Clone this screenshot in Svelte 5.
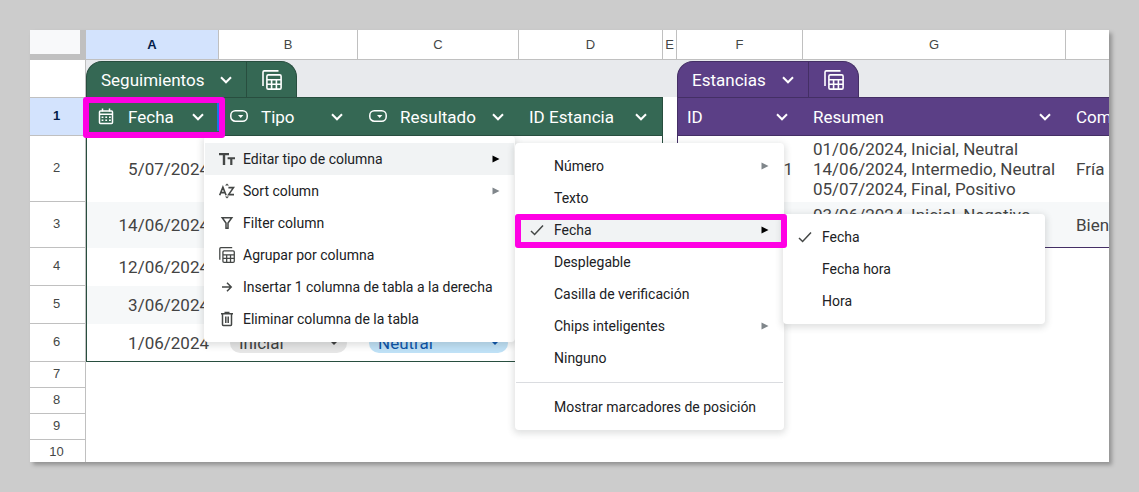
<script>
  const columns = [
    { id: 'A', width: 133 },
    { id: 'B', width: 139 },
    { id: 'C', width: 161 },
    { id: 'D', width: 144 },
    { id: 'E', width: 14 },
    { id: 'F', width: 126 },
    { id: 'G', width: 263 },
    { id: '', width: null }
  ];

  const fields = [
    { name: 'Fecha', icon: 'calendar', theme: 'green', first: true },
    { name: 'Tipo', icon: 'dropdown', theme: 'green' },
    { name: 'Resultado', icon: 'dropdown', theme: 'green' },
    { name: 'ID Estancia', theme: 'green', last: true },
    null,
    { name: 'ID', theme: 'purple', first: true },
    { name: 'Resumen', theme: 'purple' },
    { name: 'Com', theme: 'purple', open: true }
  ];

  const rows = [
    { n: 2, height: 66, date: '5/07/2024', id: '1', summary: ['01/06/2024, Inicial, Neutral', '14/06/2024, Intermedio, Neutral', '05/07/2024, Final, Positivo'], comment: 'Fría a', stay: true },
    { n: 3, height: 46, date: '14/06/2024', summary: ['03/06/2024, Inicial, Negativo'], comment: 'Bien', stay: true, stayEnd: true },
    { n: 4, height: 38, date: '12/06/2024' },
    { n: 5, height: 38, date: '3/06/2024' },
    { n: 6, height: 38, date: '1/06/2024', type: 'Inicial', result: 'Neutral', end: true }
  ];

  const emptyRows = [7, 8, 9, 10];

  const columnMenu = [
    { label: 'Editar tipo de columna', icon: 'type', sub: true, active: true },
    { label: 'Sort column', icon: 'sort', sub: true },
    { label: 'Filter column', icon: 'filter' },
    { label: 'Agrupar por columna', icon: 'group' },
    { label: 'Insertar 1 columna de tabla a la derecha', icon: 'arrow' },
    { label: 'Eliminar columna de la tabla', icon: 'trash' }
  ];

  const typeMenu = [
    { label: 'Número', sub: true },
    { label: 'Texto' },
    { label: 'Fecha', icon: 'check', sub: true, active: true },
    { label: 'Desplegable' },
    { label: 'Casilla de verificación' },
    { label: 'Chips inteligentes', sub: true },
    { label: 'Ninguno' },
    { separator: true },
    { label: 'Mostrar marcadores de posición' }
  ];

  const dateMenu = [
    { label: 'Fecha', icon: 'check' },
    { label: 'Fecha hora' },
    { label: 'Hora' }
  ];
</script>

{#snippet chevron()}
  <svg class="chevron" viewBox="0 0 12 8" width="12" height="8" aria-hidden="true">
    <path d="M1 1.3 6 6.3 11 1.3" fill="none" stroke="currentColor" stroke-width="2" />
  </svg>
{/snippet}

{#snippet icon(name)}
  {#if name === 'calendar'}
    <svg viewBox="0 0 18 18" width="18" height="18" fill="none" stroke="currentColor">
      <rect x="2.5" y="3" width="13" height="12.5" rx="1" stroke-width="1.5" />
      <path d="M2.5 6.2H15.5M5.5 .6V3.5M12.5 .6V3.5" stroke-width="1.5" />
      <path d="M4.6 9.3H14M4.6 12.3H14" stroke-width="1.6" stroke-dasharray="1.8 1.9" />
    </svg>
  {:else if name === 'dropdown'}
    <svg viewBox="0 0 18 18" width="18" height="18" fill="none">
      <rect x=".8" y="2.8" width="16.4" height="10.4" rx="4.5" stroke="currentColor" stroke-width="1.5" />
      <path d="M8 7H13.4L10.7 9.9Z" fill="currentColor" />
    </svg>
  {:else if name === 'group'}
    <svg viewBox="0 0 20 20" width="100%" height="100%" fill="none" stroke="currentColor" stroke-width="1.6">
      <path d="M1 16V2.2Q1 .9 2.3 .9H16.5" />
      <rect x="4.9" y="4.9" width="14.2" height="14.2" rx="1.4" />
      <path d="M5 9.8H19M5 14.3H19M9.6 9.8V19M14.4 9.8V19" />
    </svg>
  {:else if name === 'type'}
    <svg viewBox="0 0 16 16" width="16" height="16" fill="currentColor">
      <path d="M0 2H10V4.2H6.2V14H3.8V4.2H0ZM8.6 6.2H16V8.2H13.4V14H11.2V8.2H8.6Z" />
    </svg>
  {:else if name === 'sort'}
    <svg viewBox="0 0 16 16" width="16" height="16" fill="none" stroke="currentColor" stroke-width="1.6">
      <path d="M.7 12.2 3.9 4.2 7.1 12.2M1.8 9.6H6M9.4 4.6H14.5L9.6 11.6H15" />
      <path d="M6 2.6 8 .4 10 2.6ZM6 13.4 8 15.6 10 13.4Z" fill="currentColor" stroke="none" />
    </svg>
  {:else if name === 'filter'}
    <svg viewBox="0 0 16 16" width="16" height="16" fill="none" stroke="currentColor" stroke-width="1.5">
      <path d="M3.2 2.8H12.8L9 8V13.2H7V8Z" />
    </svg>
  {:else if name === 'arrow'}
    <svg viewBox="0 0 16 16" width="16" height="16" fill="none" stroke="currentColor" stroke-width="1.5">
      <path d="M3 8H12.2M8 3.8 12.2 8 8 12.2" />
    </svg>
  {:else if name === 'trash'}
    <svg viewBox="0 0 16 16" width="16" height="16" fill="none" stroke="currentColor" stroke-width="1.5">
      <path d="M2 2.8H14M5.5 1.6H10.5M3.5 3V13.6Q3.5 14.4 4.3 14.4H11.7Q12.5 14.4 12.5 13.6V3M6.8 5.5V12M9.2 5.5V12" />
    </svg>
  {:else if name === 'check'}
    <svg viewBox="0 0 14 14" width="14" height="14" fill="none" stroke="currentColor" stroke-width="1.5">
      <path d="M1 8 4.6 11.5 13 2.6" />
    </svg>
  {/if}
{/snippet}

{#snippet tab(name, theme)}
  <div class="tab {theme}">
    <button class="tab-name">{name}{@render chevron()}</button>
    <button class="tab-view" aria-label={name}><span class="view-icon">{@render icon('group')}</span></button>
  </div>
{/snippet}

{#snippet menu(items, place)}
  <div class="menu {place}" role="menu">
    {#each items as item}
      {#if item.separator}
        <hr />
      {:else}
        <button class="item" class:active={item.active} role="menuitem">
          <span class="item-icon">{@render icon(item.icon)}</span>
          <span class="item-label">{item.label}</span>
          {#if item.sub}
            <svg class="more" viewBox="0 0 8 8" width="8" height="8" aria-hidden="true"><path d="M.5 .5 7.5 4 .5 7.5Z" fill="currentColor" /></svg>
          {/if}
        </button>
      {/if}
    {/each}
  </div>
{/snippet}

<main>
  <div class="sheet">
    <table>
      <colgroup>
        <col class="gutter" />
        {#each columns as c}
          <col style={c.width ? `width: ${c.width}px` : null} />
        {/each}
      </colgroup>
      <thead>
        <tr class="letters">
          <td class="corner"></td>
          {#each columns as c, i}
            <th class:selected={i === 0} scope="col">{c.id}</th>
          {/each}
        </tr>
      </thead>
      <tbody>
        <tr class="names">
          <th class="num"></th>
          <td class="band" colspan="5">{@render tab('Seguimientos', 'green')}</td>
          <td class="band" colspan="3">{@render tab('Estancias', 'purple')}</td>
        </tr>
        <tr class="fields">
          <th class="num selected" scope="row">1</th>
          {#each fields as f}
            {#if f}
              <th class="field {f.theme}" class:first={f.first} class:last={f.last}>
                <div class="field-box">
                  {#if f.icon}<span class="field-icon">{@render icon(f.icon)}</span>{/if}
                  <span class="field-name">{f.name}</span>
                  {#if !f.open}<button class="field-menu" aria-label={f.name}>{@render chevron()}</button>{/if}
                </div>
              </th>
            {:else}
              <td></td>
            {/if}
          {/each}
        </tr>
        {#each rows as r}
          <tr style="height: {r.height}px" class:striped={r.n % 2 === 1}>
            <th class="num" scope="row">{r.n}</th>
            <td class="cell green first right" class:end={r.end}>{r.date}</td>
            <td class="cell green choice" class:end={r.end}>
              {#if r.type}<button class="chip grey">{r.type}<i></i></button>{/if}
            </td>
            <td class="cell green choice" class:end={r.end}>
              {#if r.result}<button class="chip blue">{r.result}<i></i></button>{/if}
            </td>
            <td class="cell green last" class:end={r.end}></td>
            <td></td>
            {#if r.stay}
              <td class="cell purple first right" class:end={r.stayEnd}>{r.id ?? ''}</td>
              <td class="cell purple summary" class:end={r.stayEnd}>
                {#each r.summary as line}<div>{line}</div>{/each}
              </td>
              <td class="cell purple" class:end={r.stayEnd}>{r.comment}</td>
            {:else}
              <td colspan="3"></td>
            {/if}
          </tr>
        {/each}
        {#each emptyRows as n}
          <tr class="blank">
            <th class="num" scope="row">{n}</th>
            <td colspan="8"></td>
          </tr>
        {/each}
      </tbody>
    </table>

    {@render menu(columnMenu, 'column-menu')}
    {@render menu(typeMenu, 'type-menu')}
    {@render menu(dateMenu, 'date-menu')}
    <div class="resize"></div>
    <div class="mark mark-field"></div>
    <div class="mark mark-item"></div>
  </div>
</main>

<style>
  :global(body) {
    background: #ccc;
  }

  main {
    box-sizing: border-box;
    height: 100vh;
    padding: 30px;
    font-family: Roboto, "Liberation Sans", sans-serif;
  }

  .sheet {
    position: relative;
    height: 100%;
    overflow: hidden;
    background: #fff;
    box-shadow: 3px 3px 4px rgba(0, 0, 0, 0.28);
  }

  button {
    border: 0;
    margin: 0;
    padding: 0;
    background: none;
    color: inherit;
    font: inherit;
    text-align: left;
  }

  svg {
    display: block;
    flex: none;
  }

  table {
    width: 100%;
    table-layout: fixed;
    border-collapse: separate;
    border-spacing: 0;
  }

  th,
  td {
    box-sizing: border-box;
    padding: 0;
    overflow: hidden;
    white-space: nowrap;
  }

  .gutter {
    width: 56px;
  }

  .letters {
    height: 30px;
  }

  .letters th,
  .num {
    border: 0 solid #c0c0c0;
    border-width: 0 1px 1px 0;
    color: #444746;
    font: 13px "Liberation Sans", Arial, sans-serif;
    text-align: center;
  }

  .num {
    padding: 0 2px 2px 0;
  }

  .letters th:last-child {
    border-right: 0;
  }

  .corner {
    background: #f8f9fa;
    border: 0 solid #c0c0c0;
    border-width: 0 6px 6px 0;
  }

  .letters th.selected,
  .num.selected {
    background: #d3e3fd;
    color: #041e49;
    font-weight: bold;
  }

  .names {
    height: 37px;
  }

  .names .num {
    border-bottom: 0;
  }

  .fields {
    height: 39px;
  }

  .fields .num {
    border-top-width: 1px;
  }

  .blank {
    height: 26px;
  }

  .green {
    --fill: #356854;
    --line: #284e3f;
  }

  .purple {
    --fill: #5b3f86;
    --line: #442f65;
  }

  .band {
    background: #e8eaed;
    vertical-align: bottom;
  }

  .tab {
    box-sizing: border-box;
    display: inline-flex;
    height: 36px;
    border: 1px solid var(--line);
    border-bottom: 0;
    border-radius: 16px 16px 0 0;
    background: var(--fill);
    color: #fff;
    font-size: 17px;
    vertical-align: bottom;
  }

  .tab-name {
    display: flex;
    align-items: center;
    gap: 16px;
    padding: 0 14px;
  }

  .tab-view {
    border-left: 1px solid var(--line);
    padding: 0 14px 0 15px;
  }

  .view-icon {
    display: block;
    width: 20px;
    height: 20px;
  }

  .field {
    border: 0 solid var(--line);
    border-width: 1px 0;
    background: var(--fill);
    color: #fff;
    font-size: 17px;
    font-weight: 400;
    text-align: left;
  }

  .field.first,
  .cell.first {
    border-left-width: 1px;
  }

  .field.last,
  .cell.last {
    border-right-width: 1px;
  }

  .field-box {
    display: flex;
    align-items: center;
    padding: 0 15px 0 10px;
  }

  .field.first .field-box {
    padding-left: 9px;
  }

  .field-icon {
    width: 18px;
    margin: 0 13px 0 1px;
  }

  .field-name {
    flex: 1;
  }

  .cell {
    border: 0 solid var(--line);
    padding: 0 10px;
    color: #434343;
    font-size: 17px;
    line-height: 20px;
  }

  .cell.end {
    border-bottom-width: 1px;
  }

  .right {
    text-align: right;
  }

  .striped .cell {
    background: #f6f8f9;
  }

  .summary {
    padding: 3px 10px;
    vertical-align: top;
  }

  .choice {
    padding: 0 11px;
  }

  .chip {
    display: flex;
    align-items: center;
    justify-content: space-between;
    width: 100%;
    height: 20px;
    border-radius: 10px;
    padding: 0 9px;
  }

  .chip i {
    border: 4px solid transparent;
    border-top-color: currentColor;
    border-bottom: 0;
  }

  .grey {
    background: #e6e6e6;
    color: #3d3d3d;
  }

  .blue {
    background: #bfe1f6;
    color: #0a53a8;
  }

  .menu {
    position: absolute;
    box-sizing: border-box;
    padding: 7px 1px;
    border-radius: 4px;
    background: #fff;
    box-shadow: 0 2px 6px 2px rgba(60, 64, 67, 0.15);
    color: #202124;
    font-size: 14px;
  }

  .column-menu {
    left: 174px;
    top: 106px;
    width: 311px;
  }

  .type-menu {
    left: 485px;
    top: 113px;
    width: 269px;
  }

  .date-menu {
    left: 753px;
    top: 184px;
    width: 262px;
  }

  .item {
    display: flex;
    align-items: center;
    width: 100%;
    height: 32px;
    padding: 0 14px;
    white-space: nowrap;
  }

  .item.active {
    background: #f1f3f4;
  }

  .item-icon {
    display: flex;
    align-items: center;
    width: 16px;
    height: 16px;
    margin-right: 8px;
    color: #444746;
  }

  .item-label {
    flex: 1;
  }

  .more {
    color: #80868b;
  }

  .active .more {
    color: #000;
  }

  hr {
    height: 1px;
    margin: 8px 0;
    border: 0;
    background: #dadce0;
  }

  .resize {
    position: absolute;
    left: 187px;
    top: 72px;
    width: 3px;
    height: 29px;
    background: #1a73e8;
  }

  .mark {
    position: absolute;
    box-sizing: border-box;
    border: 6px solid #ff00e4;
    border-radius: 3px;
    pointer-events: none;
  }

  .mark-field {
    left: 53px;
    top: 67px;
    width: 142px;
    height: 41px;
  }

  .mark-item {
    left: 485px;
    top: 184px;
    width: 272px;
    height: 34px;
  }
</style>
